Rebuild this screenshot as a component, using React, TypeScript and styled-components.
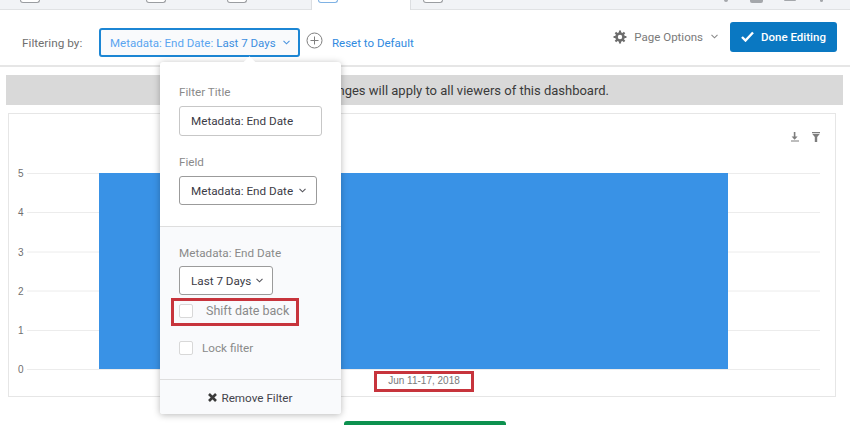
import React from "react";
import styled, { createGlobalStyle } from "styled-components";

const Global = createGlobalStyle`
  html, body { margin: 0; padding: 0; background: #fff; }
  body { width: 850px; height: 425px; overflow: hidden; font-family: Roboto, "Liberation Sans", sans-serif; }
  * { box-sizing: border-box; }
`;
const Page = styled.div`
  position: relative; width: 850px; height: 425px; overflow: hidden; background: #fff;
`;
const TabStrip = styled.div`
  height: 10px; background: #f1f3f6; border-bottom: 1px solid #e0e2e4;
  display: flex; align-items: flex-start; padding-left: 20px;
`;
const TabStub = styled.div<{ $ml: number }>`
  width: 20px; height: 3px; margin-left: ${p => p.$ml}px;
  border: 1px solid #9a9da1; border-top: 0; border-radius: 0 0 3px 3px; background: #fff;
`;
const ActiveTab = styled.div`
  width: 100px; height: 10px; margin-left: 64px; background: #fff;
  border-left: 1px solid #dcdee1; border-right: 1px solid #dcdee1; padding-left: 6px;
`;
const ActiveMark = styled.div`
  width: 20px; height: 3px; border: 1px solid #7fb2e4; border-top: 0; border-radius: 0 0 3px 3px;
`;
const TopTools = styled.div`
  margin-left: auto; margin-right: 27px; display: flex; align-items: flex-start;
`;
const ToolStub = styled.div<{ $w: number; $h: number; $ml: number }>`
  width: ${p => p.$w}px; height: ${p => p.$h}px; margin-left: ${p => p.$ml}px; background: #a4a7ab; border-radius: 0 0 2px 2px;
`;
const FilterBar = styled.div`
  height: 57px; border-bottom: 2px solid #e6e6e6; display: flex; align-items: center; padding: 0 13px 0 22px;
  font-size: 11.5px;
`;
const FilterLabel = styled.span`
  color: #6f6f6f; width: 77px; flex: none; margin-top: 10px; font-size: 11.8px;
`;
const FilterButton = styled.div`
  width: 201px; height: 29px; border: 2px solid #1c86d4; border-radius: 3px; background: #f9fafc;
  display: flex; align-items: center; padding-left: 9px; color: #5aa5f0; white-space: nowrap; flex: none; margin-top: 10px;
  b { font-weight: 400; color: #3d8fe0; margin-left: 3px; }
`;
const Chevron = styled.svg`
  width: 7px; height: 5px; flex: none; fill: none; stroke: currentColor; stroke-width: 1.1;
`;
const FilterChevron = styled(Chevron)`
  margin-left: auto; margin-right: 8px; color: #4c95de;
`;
const AddIcon = styled.svg`
  width: 17px; height: 17px; margin-left: 6px; margin-top: 5px; flex: none; color: #7f7f7f;
`;
const ResetLink = styled.span`
  margin-left: 9px; color: #2f8ae0; white-space: nowrap; margin-top: 10px;
`;
const PageOptions = styled.div`
  margin-left: auto; display: flex; align-items: center; color: #7a7a7a; white-space: nowrap; margin-top: -2px;
`;
const Gear = styled.svg`
  width: 14px; height: 14px; margin-right: 7px; color: #6d6d6d;
`;
const OptionsChevron = styled(Chevron)`
  margin-left: 8px; color: #8a8a8a;
`;
const DoneButton = styled.div`
  margin-left: 12px; margin-top: -2px; width: 107px; height: 30px; border-radius: 3px; background: #0a78c2; color: #fff;
  display: flex; align-items: center; padding-left: 11px; font-weight: 500; white-space: nowrap;
`;
const Check = styled.svg`
  width: 13px; height: 11px; margin-right: 7px;
`;
const Notice = styled.div`
  margin: 8px 7px 0 6px; height: 30px; background: #d9d9d9; color: #3a3a3a; font-size: 13px;
  display: flex; align-items: center; justify-content: flex-end; padding-right: 234px; white-space: nowrap;
`;
const ChartCard = styled.div`
  margin: 8px 0 0 8px; width: 828px; height: 284px; border: 1px solid #e6e6e6;
`;
const ChartSvg = styled.svg`
  display: block; width: 826px; height: 282px;
`;
const Popover = styled.div`
  position: absolute; left: 160px; top: 62px; width: 181px; height: 352px; background: #fff; border-radius: 3px;
  box-shadow: 0 1px 7px rgba(0,0,0,.28); display: flex; flex-direction: column; font-size: 11.7px;
  &::before {
    content: ""; position: absolute; top: -4px; left: 85px; width: 9px; height: 9px; background: #fff; transform: rotate(45deg);
  }
`;
const PopTop = styled.div`
  height: 165px; padding: 22px 19px 0; border-bottom: 1px solid #dedede;
`;
const PopMiddle = styled.div`
  flex: 1; background: #f9fafc; padding: 18px 19px 0;
`;
const PopFooter = styled.div`
  height: 35px; background: #f9fafc; border-top: 1px solid #dedede; display: flex; align-items: center; justify-content: center;
  color: #44444c; border-radius: 0 0 3px 3px; gap: 4px; padding-top: 1px;
`;
const RemoveIcon = styled.svg`
  width: 9px; height: 9px; flex: none;
`;
const FieldLabel = styled.div<{ $mt?: number }>`
  color: #8a8a8a; line-height: 16px; margin-top: ${p => p.$mt ?? 0}px;
`;
const TextBox = styled.div`
  margin-top: 6px; width: 143px; height: 30px; border: 1px solid #c7c7c7; border-radius: 3px; background: #fff;
  color: #3c3c46; padding-left: 11px; display: flex; align-items: center; white-space: nowrap;
`;
const SelectBox = styled.div<{ $w: number; $mt: number; $chevronGap: number }>`
  margin-top: ${p => p.$mt}px; width: ${p => p.$w}px; height: 29px; border: 1px solid #9b9b9b; border-radius: 3px; background: #fff;
  color: #3c3c46; padding-left: 11px; padding-right: ${p => p.$chevronGap}px; display: flex; align-items: center; white-space: nowrap;
`;
const SelectChevron = styled(Chevron)`
  margin-left: auto; color: #55555c;
`;
const CheckRow = styled.div<{ $mt: number; $gap: number; $size: number }>`
  display: flex; align-items: center; margin-top: ${p => p.$mt}px; color: #8a8a8a; gap: ${p => p.$gap}px; white-space: nowrap;
  font-size: ${p => p.$size}px;
`;
const CheckBox = styled.span`
  width: 14px; height: 14px; border: 1px solid #d8d8d8; border-radius: 2px; background: #fff; flex: none;
`;
const Highlight = styled.div<{ $l: number; $t: number; $w: number; $h: number }>`
  position: absolute; left: ${p => p.$l}px; top: ${p => p.$t}px; width: ${p => p.$w}px; height: ${p => p.$h}px;
  border: 3px solid #c7343c; pointer-events: none;
`;
const DateLabel = styled.div`
  position: absolute; left: 374px; top: 370px; width: 100px; height: 21px; display: flex; align-items: center; justify-content: center;
  font-family: "Liberation Sans", Arial, sans-serif; font-size: 10px; color: #7a7a7a;
`;
const GreenButton = styled.div`
  position: absolute; left: 344px; top: 421px; width: 162px; height: 8px; background: #0d914f; border-radius: 3px 3px 0 0;
`;

const ChevronDown = () => <polyline points="0.5,0.8 3.5,3.8 6.5,0.8" />;
const rows = [
  { label: "5", y: 59.5 }, { label: "4", y: 98.5 }, { label: "3", y: 138 },
  { label: "2", y: 177 }, { label: "1", y: 216.5 }, { label: "0", y: 255.5 },
];

export default function App() {
  return (
    <Page>
      <Global />
      <TabStrip>
        <TabStub $ml={0} />
        <TabStub $ml={106} />
        <TabStub $ml={61} />
        <ActiveTab><ActiveMark /></ActiveTab>
        <TabStub $ml={12} />
        <TopTools>
          <ToolStub $w={4} $h={2} $ml={0} />
          <ToolStub $w={13} $h={3} $ml={22} />
          <ToolStub $w={12} $h={1} $ml={21} />
          <ToolStub $w={3} $h={2} $ml={24} />
        </TopTools>
      </TabStrip>
      <FilterBar>
        <FilterLabel>Filtering by:</FilterLabel>
        <FilterButton>
          Metadata: End Date:<b>Last 7 Days</b>
          <FilterChevron viewBox="0 0 7 5"><ChevronDown /></FilterChevron>
        </FilterButton>
        <AddIcon viewBox="0 0 17 17" fill="none" stroke="currentColor">
          <circle cx="8.5" cy="8.5" r="7.5" />
          <path d="M8.5 4.5v8M4.5 8.5h8" />
        </AddIcon>
        <ResetLink>Reset to Default</ResetLink>
        <PageOptions>
          <Gear viewBox="0 0 24 24" fill="none" stroke="currentColor" strokeWidth="4.5" strokeLinejoin="round">
            <circle cx="12" cy="12" r="6" />
            <path strokeWidth="3.6" d="M12 1v4M12 19v4M1 12h4M19 12h4M4.2 4.2l2.9 2.9M16.9 16.9l2.9 2.9M4.2 19.8l2.9-2.9M16.9 7.1l2.9-2.9" />
          </Gear>
          Page Options
          <OptionsChevron viewBox="0 0 7 5"><ChevronDown /></OptionsChevron>
        </PageOptions>
        <DoneButton>
          <Check viewBox="0 0 13 11" fill="none" stroke="#fff" strokeWidth="2.4"><path d="M1 6l3.5 3.5L12 1.5" /></Check>
          Done Editing
        </DoneButton>
      </FilterBar>
      <Notice>Any changes will apply to all viewers of this dashboard.</Notice>
      <ChartCard>
        <ChartSvg viewBox="0 0 826 282">
          {rows.map(r => (
            <g key={r.label}>
              <line x1="18" x2="811" y1={r.y} y2={r.y} stroke="#ececec" />
              <text x="9" y={r.y + 3.5} fontFamily="Liberation Sans, sans-serif" fontSize="10" fill="#6f6f6f">{r.label}</text>
            </g>
          ))}
          <rect x="90" y="59" width="629" height="196" fill="#3992e6" />
          <g fill="#7d7d7d">
            <path d="M784.8 18h1.6v4.5h2.2l-3 3.2-3-3.2h2.2z" />
            <rect x="782" y="26.5" width="8" height="1" />
            <path d="M803 18h8v1.2h-8zM803.3 20h7.4l-2.5 3v5h-2.4v-5z" />
          </g>
        </ChartSvg>
      </ChartCard>
      <Popover>
        <PopTop>
          <FieldLabel>Filter Title</FieldLabel>
          <TextBox>Metadata: End Date</TextBox>
          <FieldLabel $mt={18}>Field</FieldLabel>
          <SelectBox $w={138} $mt={6} $chevronGap={10}>
            Metadata: End Date
            <SelectChevron viewBox="0 0 7 5"><ChevronDown /></SelectChevron>
          </SelectBox>
        </PopTop>
        <PopMiddle>
          <FieldLabel>Metadata: End Date</FieldLabel>
          <SelectBox $w={94} $mt={5} $chevronGap={9}>
            Last 7 Days
            <SelectChevron viewBox="0 0 7 5"><ChevronDown /></SelectChevron>
          </SelectBox>
          <CheckRow $mt={8} $gap={13} $size={12.5}>
            <CheckBox />Shift date back
          </CheckRow>
          <CheckRow $mt={23} $gap={9} $size={11.7}>
            <CheckBox />Lock filter
          </CheckRow>
        </PopMiddle>
        <PopFooter>
          <RemoveIcon viewBox="0 0 9 9" fill="none" stroke="#3a3a3a" strokeWidth="2.6"><path d="M1 1l7 7M8 1L1 8" /></RemoveIcon>
          Remove Filter
        </PopFooter>
      </Popover>
      <Highlight $l={171} $t={298} $w={128} $h={28} />
      <DateLabel>Jun 11-17, 2018</DateLabel>
      <Highlight $l={374} $t={371} $w={100} $h={21} />
      <GreenButton />
    </Page>
  );
}
